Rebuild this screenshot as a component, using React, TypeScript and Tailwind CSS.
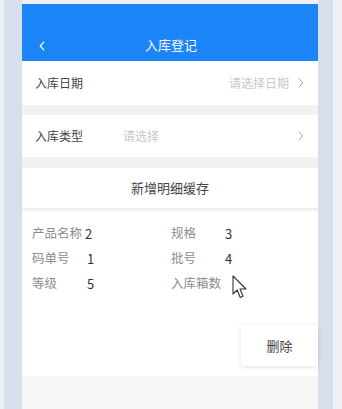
import React from 'react';

const FONT = { fontFamily: '"Noto Sans CJK SC", "Liberation Sans", sans-serif' };

function Chevron({ className }: { className?: string }) {
  return (
    <svg viewBox="0 0 8 14" className={className} fill="none" stroke="currentColor" strokeWidth="1.2" strokeLinecap="round" strokeLinejoin="round">
      <path d="M1.5 1.5 L6.5 7 L1.5 12.5" />
    </svg>
  );
}

const DETAILS = [
  { l: '产品名称', v: '2', r: '规格', rv: '3' },
  { l: '码单号', v: '1', r: '批号', rv: '4' },
  { l: '等级', v: '5', r: '入库箱数', rv: '' },
];

export default function App() {
  return (
    <div className="relative w-[342px] h-[409px] overflow-hidden flex bg-[#eef0f3]" style={FONT}>
      <div className="w-[4px] bg-[#eef0f3]" />
      <div className="w-[18px] bg-[#d6dfea]" />
      {/* phone screen */}
      <div className="w-[296px] flex flex-col bg-[#f6f6f6]">
        <div className="h-[4px] bg-[#eef0f3]" />
        <div className="h-[57px] bg-[#1b84f6] flex items-end pb-[6px] relative">
          <div className="w-full flex items-center h-[20px]">
            <svg viewBox="0 0 8 14" className="absolute left-[17px] bottom-[10px] w-[6px] h-[10px] text-white" fill="none" stroke="currentColor" strokeWidth="1.8" strokeLinecap="round" strokeLinejoin="round">
              <path d="M6.5 1.5 L1.5 7 L6.5 12.5" />
            </svg>
            <div className="flex-1 text-center text-white text-[13px] pl-[2px]">入库登记</div>
          </div>
        </div>
        <div className="h-[44px] bg-white flex items-center pl-[13px] pr-[14px] text-[12px]">
          <span className="text-[#444]">入库日期</span>
          <span className="ml-auto text-[#c8c8c8]">请选择日期</span>
          <Chevron className="ml-[9px] w-[6px] h-[10px] text-[#999]" />
        </div>
        <div className="h-[10px] bg-[#f1f1f1]" />
        <div className="h-[42px] bg-white flex items-center pl-[13px] pr-[14px] text-[12px]">
          <span className="text-[#444] w-[88px]">入库类型</span>
          <span className="text-[#c8c8c8]">请选择</span>
          <Chevron className="ml-auto w-[6px] h-[10px] text-[#999]" />
        </div>
        <div className="h-[11px] bg-[#f1f1f1]" />
        <div className="h-[40px] bg-white flex items-center justify-center text-[13px] text-[#444] shadow-[0_1px_3px_rgba(0,0,0,0.06)]">
          新增明细缓存
        </div>
        <div className="h-[3px]" />
        <div className="bg-white h-[165px] relative pt-[13px] text-[12.5px]">
          <div className="flex flex-col gap-[6px]">
            {DETAILS.map((d) => (
              <div key={d.l} className="flex h-[19px] items-center">
                <div className="w-[149px] flex pl-[10px]">
                  <span className="text-[#8c8c8c] w-[52px]">{d.l}</span>
                  <span className={`text-[#333] text-[13px] ${d.l === '产品名称' ? 'ml-[1px]' : 'ml-[3px]'}`}>{d.v}</span>
                </div>
                <div className="flex">
                  <span className="text-[#8c8c8c] w-[54px]">{d.r}</span>
                  <span className="text-[#333] text-[13px]">{d.rv}</span>
                </div>
              </div>
            ))}
          </div>
          <div className="absolute right-0 top-[114px] w-[77px] h-[41px] bg-white flex items-center justify-center text-[13px] text-[#444] rounded-l-[2px] shadow-[0_1px_5px_rgba(0,0,0,0.12)]">
            删除
          </div>
        </div>
        <div className="flex-1 bg-[#f7f7f7]" />
      </div>
      <div className="w-[15px] bg-[#d6dfea]" />
      <div className="flex-1 bg-[#eef0f3]" />
      {/* mouse cursor */}
      <svg viewBox="0 0 16 26" className="absolute left-[232px] top-[275px] w-[16px] h-[26px]" fill="white" stroke="#333" strokeWidth="1.1" strokeLinejoin="round">
        <path d="M1 1 L1 19 L5.2 15 L8.2 22.5 L11 21.3 L8 14 L14 14 Z" />
      </svg>
    </div>
  );
}
